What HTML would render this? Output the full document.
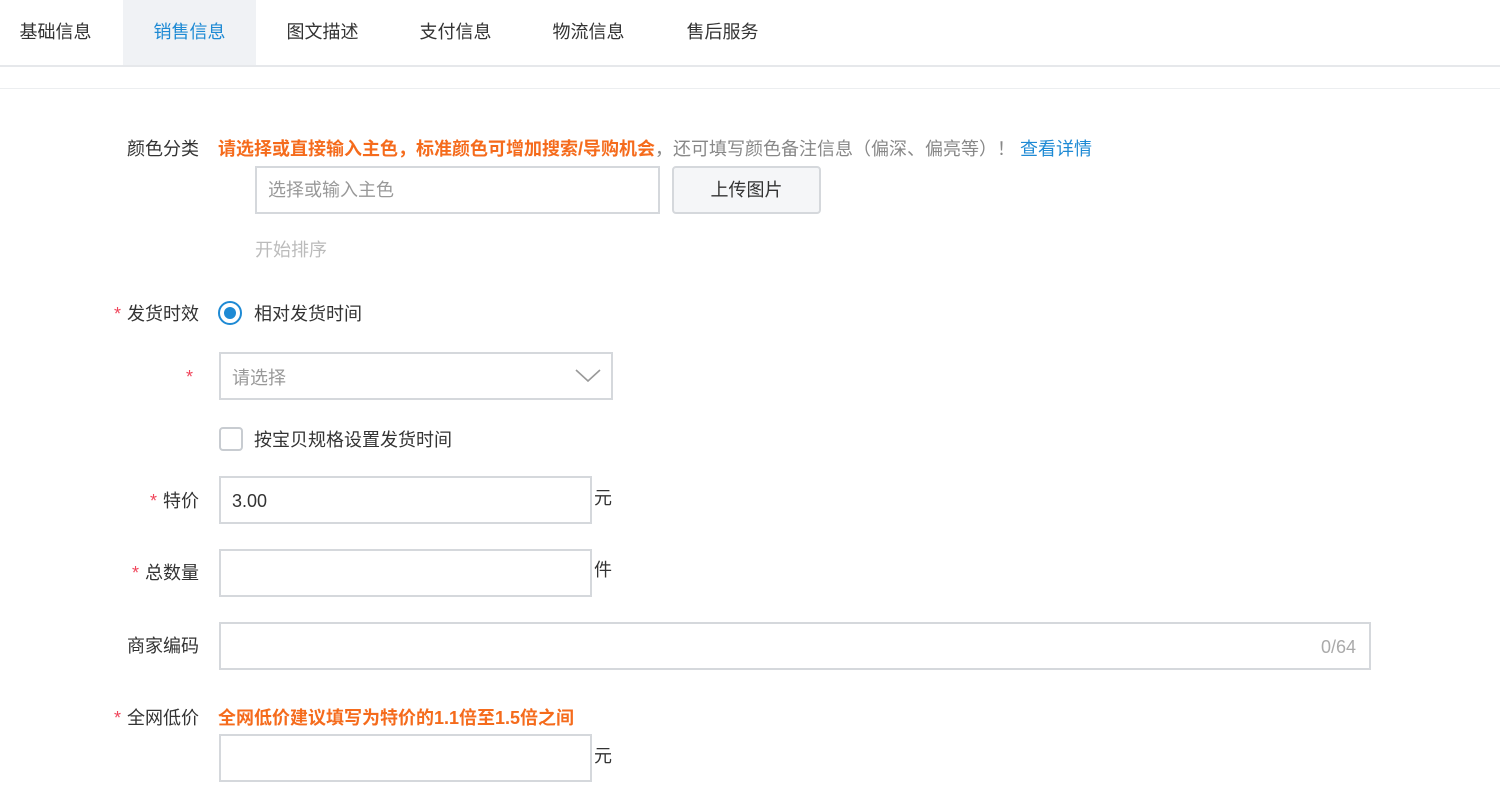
<!DOCTYPE html>
<html><head><meta charset="utf-8"><style>
*{margin:0;padding:0;box-sizing:border-box}
body{width:1500px;height:808px;overflow:hidden;background:#fff;font-family:"Liberation Sans","Noto Sans CJK SC",sans-serif;font-size:18px;color:#333;position:relative}
.a{position:absolute;white-space:nowrap;line-height:20px}
.tab{position:absolute;top:0;height:66px;width:133px;line-height:64px;text-align:center}
.inp{position:absolute;border:2px solid #d5d8dc;background:#fff}
.lbl{position:absolute;right:1301px;white-space:nowrap;line-height:20px}
.st{color:#f0455b;margin-right:6px}
.or{color:#f56b1c;font-weight:bold}
</style></head><body>
<div class="tab" style="left:-11px">基础信息</div>
<div class="tab" style="left:123px;background:#f0f2f5;color:#1e8ad4">销售信息</div>
<div class="tab" style="left:256px">图文描述</div>
<div class="tab" style="left:389px">支付信息</div>
<div class="tab" style="left:522px">物流信息</div>
<div class="tab" style="left:656px">售后服务</div>
<div style="position:absolute;left:0;top:65px;width:1500px;height:2px;background:#e6e8eb"></div>
<div style="position:absolute;left:0;top:88px;width:1500px;height:1px;background:#eceef0"></div>

<div class="lbl" style="top:139px">颜色分类</div>
<div class="a" style="left:218px;top:139px"><span class="or">请选择或直接输入主色，标准颜色可增加搜索/导购机会</span><span style="color:#888">，还可填写颜色备注信息（偏深、偏亮等）！</span><span style="color:#1e8ad4"> 查看详情</span></div>
<div class="inp" style="left:255px;top:166px;width:405px;height:48px"><span class="a" style="left:11px;top:12px;color:#999">选择或输入主色</span></div>
<div style="position:absolute;left:672px;top:166px;width:149px;height:48px;border:2px solid #d5d8dc;border-radius:4px;background:#f5f6f8;text-align:center;line-height:44px">上传图片</div>
<div class="a" style="left:255px;top:240px;color:#bbb">开始排序</div>

<div class="lbl" style="top:304px"><span class="st">*</span>发货时效</div>
<div style="position:absolute;left:218px;top:301px;width:24px;height:24px;border:2px solid #1e8ad4;border-radius:50%"><div style="position:absolute;left:4px;top:4px;width:12px;height:12px;border-radius:50%;background:#1e8ad4"></div></div>
<div class="a" style="left:254px;top:304px">相对发货时间</div>

<div class="lbl" style="top:367px"><span class="st">*</span></div>
<div class="inp" style="left:219px;top:352px;width:394px;height:48px"><span class="a" style="left:11px;top:14px;color:#999">请选择</span>
<svg style="position:absolute;left:354px;top:14px" width="26" height="16" viewBox="0 0 26 16"><path d="M1 2 L13 13 L25 2" fill="none" stroke="#999" stroke-width="1.6"/></svg></div>

<div style="position:absolute;left:219px;top:427px;width:24px;height:24px;border:2px solid #c8ccd1;border-radius:4px"></div>
<div class="a" style="left:254px;top:430px">按宝贝规格设置发货时间</div>

<div class="lbl" style="top:491px"><span class="st">*</span>特价</div>
<div class="inp" style="left:219px;top:476px;width:373px;height:48px"><span class="a" style="left:11px;top:13px">3.00</span></div>
<div class="a" style="left:594px;top:488px">元</div>

<div class="lbl" style="top:563px"><span class="st">*</span>总数量</div>
<div class="inp" style="left:219px;top:549px;width:373px;height:48px"></div>
<div class="a" style="left:594px;top:560px">件</div>

<div class="lbl" style="top:636px">商家编码</div>
<div class="inp" style="left:219px;top:622px;width:1152px;height:48px"><span class="a" style="right:13px;top:13px;color:#aaa">0/64</span></div>

<div class="lbl" style="top:708px"><span class="st">*</span>全网低价</div>
<div class="a or" style="left:218px;top:708px">全网低价建议填写为特价的1.1倍至1.5倍之间</div>
<div class="inp" style="left:219px;top:734px;width:373px;height:48px"></div>
<div class="a" style="left:594px;top:746px">元</div>
</body></html>
